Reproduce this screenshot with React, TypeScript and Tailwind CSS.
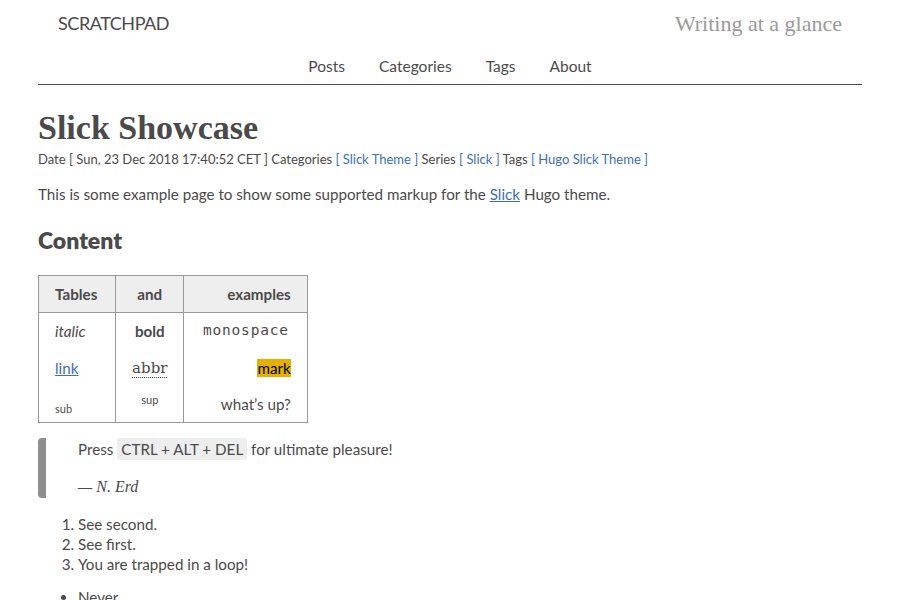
export default function App() {
  const sans = { fontFamily: 'Lato, "Open Sans", sans-serif' };
  return (
    <div className="min-h-screen bg-white text-[#4a4a4a]" style={sans}>
      <div className="mx-[38px]">
        {/* Header */}
        <header className="border-b border-[#4a4a4a]">
          <div className="flex items-center justify-between px-5 h-[46px]">
            <span className="text-[18px] tracking-tight">SCRATCHPAD</span>
            <span className="text-[22px] text-[#9a9a9a] font-['Liberation_Serif',serif]">Writing at a glance</span>
          </div>
          <nav className="flex justify-center gap-[34px] text-[15.5px] h-[38px] pt-[4px] items-center">
            <a>Posts</a>
            <a>Categories</a>
            <a>Tags</a>
            <a>About</a>
          </nav>
        </header>

        {/* Article */}
        <h1 className="mt-[24px] text-[34px] leading-[38px] font-bold font-['Liberation_Serif',serif]">
          Slick Showcase
        </h1>
        <p className="text-[13px] leading-[20px] mt-[2px]">
          Date [ Sun, 23 Dec 2018 17:40:52 CET ] Categories{" "}
          <span className="text-[#3d6fb6]">[ Slick Theme ]</span> Series{" "}
          <span className="text-[#3d6fb6]">[ Slick ]</span> Tags{" "}
          <span className="text-[#3d6fb6]">[ Hugo Slick Theme ]</span>
        </p>
        <p className="text-[15.2px] leading-[24px] mt-[13px]">
          This is some example page to show some supported markup for the{" "}
          <a className="text-[#3d6fb6] underline">Slick</a> Hugo theme.
        </p>

        <h2 className="text-[23px] font-extrabold mt-[19px] leading-[30px]">Content</h2>

        <table className="mt-[20px] border border-[#999] border-collapse text-[15.2px]">
          <thead>
            <tr className="bg-[#eeeeee] h-[37px]">
              <th className="border border-[#999] text-left pl-4 pr-[18px]">Tables</th>
              <th className="border border-[#999] text-center px-[21px]">and</th>
              <th className="border border-[#999] text-right pl-[43px] pr-4">examples</th>
            </tr>
          </thead>
          <tbody>
            <tr className="h-[37px]">
              <td className="border-x border-[#999] pl-4 italic">italic</td>
              <td className="border-x border-[#999] text-center font-bold">bold</td>
              <td className="border-x border-[#999] text-right pr-[18px] font-['DejaVu_Sans_Mono',monospace] text-[14.5px] tracking-[0.8px]">monospace</td>
            </tr>
            <tr className="h-[37px]">
              <td className="border-x border-[#999] pl-4">
                <a className="text-[#3d6fb6] underline">link</a>
              </td>
              <td className="border-x border-[#999] text-center">
                <abbr className="font-['DejaVu_Serif',serif] text-[15px] no-underline border-b border-dotted border-[#4a4a4a]">abbr</abbr>
              </td>
              <td className="border-x border-[#999] text-right pr-4">
                <mark className="bg-[#e5b000] text-black">mark</mark>
              </td>
            </tr>
            <tr className="h-[36px]">
              <td className="border-x border-b border-[#999] pl-4">
                <sub className="text-[11px]">sub</sub>
              </td>
              <td className="border-x border-b border-[#999] text-center">
                <sup className="text-[11px]">sup</sup>
              </td>
              <td className="border-x border-b border-[#999] text-right pr-4">what’s up?</td>
            </tr>
          </tbody>
        </table>

        <blockquote className="mt-[15px] w-[784px] rounded-[4px] border-l-8 border-[#8e8e8e] bg-white pl-[32px] text-[15.2px]">
          <p className="leading-[22px]">
            Press{" "}
            <kbd className="bg-[#eeeeee] rounded-[3px] px-1 py-[2px]" style={sans}>CTRL + ALT + DEL</kbd>{" "}
            for ultimate pleasure!
          </p>
          <p className="italic mt-[16px] font-['Liberation_Serif',serif] text-[16px] leading-[22px]">— N. Erd</p>
        </blockquote>

        <ol className="list-decimal pl-[40px] mt-[16px] text-[15.2px] leading-[20px]">
          <li>See second.</li>
          <li>See first.</li>
          <li>You are trapped in a loop!</li>
        </ol>

        <ul className="list-disc pl-[40px] mt-[13px] text-[15.2px] leading-[20px]">
          <li>Never</li>
          <li>Gonna</li>
        </ul>
      </div>
    </div>
  );
}
